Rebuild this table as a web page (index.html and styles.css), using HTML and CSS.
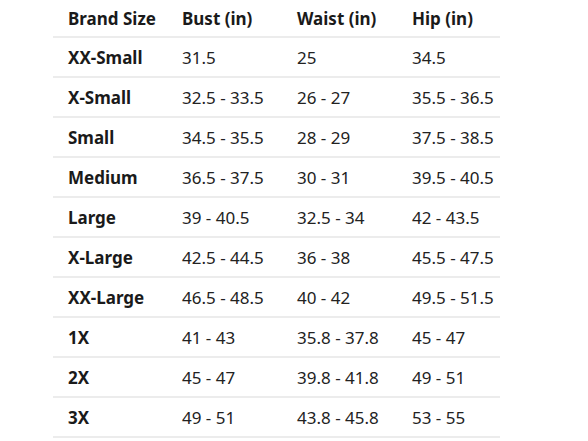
FILE: index.html
```html
<!DOCTYPE html>
<html>
<head>
<meta charset="utf-8">
<link rel="stylesheet" href="styles.css">
</head>
<body>
<div class="wrap">
<table class="chart">
<colgroup><col class="c1"><col class="c2"><col class="c3"><col class="c4"></colgroup>
<thead>
<tr><th>Brand Size</th><th>Bust (in)</th><th>Waist (in)</th><th>Hip (in)</th></tr>
</thead>
<tbody>
<tr><th>XX-Small</th><td>31.5</td><td>25</td><td>34.5</td></tr>
<tr><th>X-Small</th><td>32.5 - 33.5</td><td>26 - 27</td><td>35.5 - 36.5</td></tr>
<tr><th>Small</th><td>34.5 - 35.5</td><td>28 - 29</td><td>37.5 - 38.5</td></tr>
<tr><th>Medium</th><td>36.5 - 37.5</td><td>30 - 31</td><td>39.5 - 40.5</td></tr>
<tr><th>Large</th><td>39 - 40.5</td><td>32.5 - 34</td><td>42 - 43.5</td></tr>
<tr><th>X-Large</th><td>42.5 - 44.5</td><td>36 - 38</td><td>45.5 - 47.5</td></tr>
<tr><th>XX-Large</th><td>46.5 - 48.5</td><td>40 - 42</td><td>49.5 - 51.5</td></tr>
<tr><th>1X</th><td>41 - 43</td><td>35.8 - 37.8</td><td>45 - 47</td></tr>
<tr><th>2X</th><td>45 - 47</td><td>39.8 - 41.8</td><td>49 - 51</td></tr>
<tr><th>3X</th><td>49 - 51</td><td>43.8 - 45.8</td><td>53 - 55</td></tr>
</tbody>
</table>
</div>
</body>
</html>
```
FILE: styles.css
```css
html, body {
  margin: 0;
  padding: 0;
  background: #ffffff;
}
.wrap {
  padding-left: 53px;
}
.chart {
  border-collapse: collapse;
  width: 447px;
  table-layout: fixed;
  font-family: "Noto Sans", "Open Sans", sans-serif;
  font-size: 17px;
  color: #222222;
}
.c1 { width: 114px; }
.c2 { width: 115px; }
.c3 { width: 115px; }
.c4 { width: 103px; }
.chart th, .chart td {
  text-align: left;
  padding: 0 0 0 15px;
  white-space: nowrap;
  border-bottom: 2px solid #ececec;
}
.chart th {
  font-weight: 700;
  color: #1a1a1a;
}
.chart td {
  font-weight: 400;
  color: #222222;
}
.chart thead th {
  height: 36px;
}
.chart tbody th, .chart tbody td {
  height: 38px;
}
```
